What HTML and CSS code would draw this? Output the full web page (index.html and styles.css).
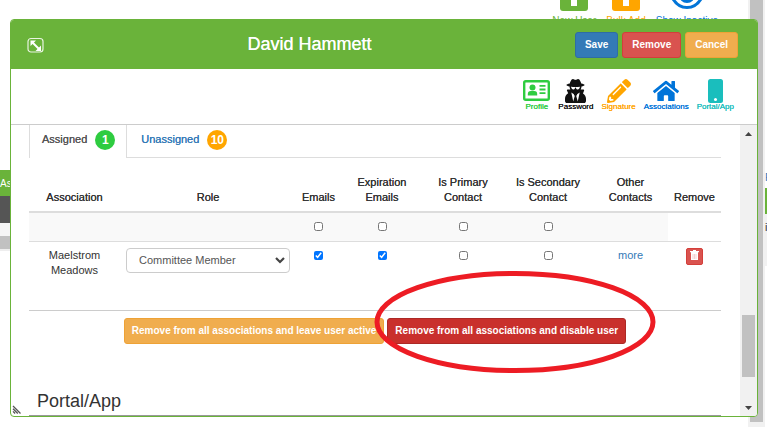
FILE: index.html
```html
<!DOCTYPE html>
<html lang="en">
<head>
<meta charset="utf-8">
<title>David Hammett</title>
<link rel="stylesheet" href="styles.css">
</head>
<body>
<div class="page">
  <div class="page-main">
    <div class="page-tools">
      <a href="#" class="page-tool new"><svg width="28" height="28" viewBox="0 0 28 28"><rect width="28" height="28" rx="3" fill="currentColor"/><path d="M11 5h6v18h-6z" fill="#fff"/></svg>New User</a>
      <a href="#" class="page-tool bulk"><svg width="28" height="28" viewBox="0 0 28 28"><rect width="28" height="28" rx="3" fill="currentColor"/><path d="M11 5h6v18h-6z" fill="#fff"/></svg>Bulk Add</a>
      <a href="#" class="page-tool show"><svg width="38" height="28" viewBox="0 0 38 28"><path d="M2.500 11Q8 24.500 19 24.500T35.500 11" fill="none" stroke="currentColor" stroke-width="3"/><circle cx="19" cy="12" r="8" fill="currentColor"/></svg>Show Inactive</a>
    </div>
    <div class="strip strip-head">As</div>
    <div class="strip strip-dark"></div>
    <div class="strip strip-light"></div>
    <div class="strip strip-scroll"></div>
    <div class="strip strip-end"></div>
  </div>
  <div class="page-track"><div class="page-thumb"></div></div>
  <div class="page-edge"><div class="edge-link">P</div><div class="edge-head"></div><div class="edge-row">i</div></div>
</div>

<div class="dialog" role="dialog" aria-labelledby="title">
  <header class="dialog-head">
    <button class="expand" aria-label="Expand"><svg width="17" height="16" viewBox="0 0 17 16"><rect x="1" y="1.500" width="15" height="13.500" rx="3" fill="none" stroke="#fff" stroke-opacity=".85" stroke-width="1.200"/><path d="M3.500 3.500h5.500L3.500 9zM14 14H8.500L14 8.500z" fill="#fff"/><path d="M5 5l7.500 7.500" stroke="#fff" stroke-width="2"/></svg></button>
    <h1 id="title">David Hammett</h1>
    <div class="actions">
      <button class="btn save">Save</button>
      <button class="btn danger">Remove</button>
      <button class="btn warn">Cancel</button>
    </div>
  </header>
  <nav class="sections">
    <a href="#" class="profile"><svg width="27" height="24" viewBox="0 0 27 24"><rect x="1.200" y="2.200" width="24.600" height="18.600" rx="1.500" fill="none" stroke="currentColor" stroke-width="2.400"/><circle cx="9.500" cy="8.500" r="3" fill="currentColor"/><path d="M4.800 16.500v-1.500q0-3 3-3h3.400q3 0 3 3v1.500zM16.500 6h6v1.800h-6zM16.500 9.600h6v1.800h-6zM16.500 13.200h6V15h-6z" fill="currentColor"/></svg>Profile</a>
    <a href="#" class="password"><svg width="21" height="24" viewBox="0 0 448 512"><path fill="currentColor" d="M383.9 308.3l23.9-62.6c4-10.500-3.700-21.700-15-21.700h-58.500c11-18.900 17.800-40.600 17.800-64v-.3c39.200-7.800 64-19.100 64-31.700 0-13.300-27.300-25.100-70.100-33-9.200-32.800-27-65.800-40.600-82.800-9.500-11.900-25.900-15.600-39.500-8.800l-27.600 13.800c-9 4.500-19.600 4.500-28.600 0L182.100 3.400c-13.600-6.800-30-3.100-39.500 8.800-13.500 17-31.400 50-40.600 82.800-42.700 7.900-70 19.700-70 33 0 12.600 24.800 23.900 64 31.700v.3c0 23.400 6.800 45.100 17.800 64H56.300c-11.500 0-19.200 11.700-14.700 22.300l25.800 60.200C27.300 329.800 0 372.700 0 422.400v44.800C0 491.900 20.100 512 44.800 512h358.400c24.700 0 44.800-20.100 44.800-44.800v-44.800c0-48.400-25.800-90.400-64.100-114.100zM176 480l-41.600-192 49.600 32 24 40-32 120zm96 0l-32-120 24-40 49.600-32L272 480zm41.700-298.500c-3.900 11.900-7 24.600-16.500 33.400-10.100 9.300-48 22.400-64-25-2.800-8.400-15.400-8.400-18.300 0-17 50.200-56 32.400-64 25-9.500-8.800-12.700-21.500-16.500-33.400-.8-2.500-6.300-5.700-6.300-5.800v-10.800c28.300 3.600 61 5.800 96 5.800s67.700-2.100 96-5.800v10.800c-.1.1-5.600 3.200-6.400 5.800z"/></svg>Password</a>
    <a href="#" class="signature"><svg width="24" height="24" viewBox="0 0 512 512"><path fill="currentColor" d="M497.900 142.100l-46.100 46.100c-4.700 4.700-12.300 4.700-17 0l-111-111c-4.700-4.700-4.700-12.300 0-17l46.100-46.100c18.700-18.700 49.100-18.700 67.900 0l60.100 60.100c18.800 18.700 18.800 49.100 0 67.900zM284.200 99.800L21.600 362.400.4 483.900c-2.900 16.400 11.400 30.600 27.800 27.800l121.500-21.300 262.600-262.600c4.700-4.700 4.700-12.300 0-17l-111-111c-4.800-4.700-12.400-4.700-17.100 0zM124.100 339.900c-5.500-5.500-5.500-14.300 0-19.800l154-154c5.500-5.500 14.300-5.500 19.800 0s5.500 14.300 0 19.800l-154 154c-5.500 5.500-14.300 5.500-19.800 0zM88 424h48v36.300l-64.500 11.300-31.100-31.100L51.700 376H88v48z"/></svg>Signature</a>
    <a href="#" class="assoc"><svg width="26" height="24" viewBox="0 0 576 512"><path fill="currentColor" d="M280.370 148.260L96 300.110V464a16 16 0 0 0 16 16l112.060-.29a16 16 0 0 0 15.920-16V368a16 16 0 0 1 16-16h64a16 16 0 0 1 16 16v95.640a16 16 0 0 0 16 16.050L464 480a16 16 0 0 0 16-16V300L295.670 148.260a12.190 12.190 0 0 0-15.300 0zM571.600 251.470L488 182.560V44.050a12 12 0 0 0-12-12h-56a12 12 0 0 0-12 12v72.610L318.470 43a48 48 0 0 0-61 0L4.340 251.470a12 12 0 0 0-1.600 16.900l25.500 31A12 12 0 0 0 45.150 301l235.220-193.740a12.190 12.190 0 0 1 15.300 0L530.900 301a12 12 0 0 0 16.900-1.600l25.500-31a12 12 0 0 0-1.700-16.930z"/></svg>Associations</a>
    <a href="#" class="portal"><svg width="15" height="24" viewBox="0 0 15 24"><rect width="15" height="24" rx="2.500" fill="currentColor"/><circle cx="7.500" cy="20.500" r="1.500" fill="#fff"/></svg>Portal/App</a>
  </nav>
  <div class="scroller">
    <main class="content">
      <div class="tabs" role="tablist">
        <button class="tab active" role="tab" aria-selected="true">Assigned <span class="badge green">1</span></button>
        <button class="tab" role="tab" aria-selected="false">Unassigned <span class="badge orange">10</span></button>
      </div>
      <table>
        <colgroup><col class="c-assoc"><col class="c-role"><col class="c-emails"><col class="c-exp"><col class="c-prim"><col class="c-sec"><col class="c-other"><col class="c-remove"></colgroup>
        <thead><tr><th>Association</th><th>Role</th><th>Emails</th><th>Expiration Emails</th><th>Is Primary Contact</th><th>Is Secondary Contact</th><th>Other Contacts</th><th>Remove</th></tr></thead>
        <tbody>
          <tr class="all"><td></td><td></td><td><input type="checkbox" aria-label="All emails"></td><td><input type="checkbox" aria-label="All expiration emails"></td><td><input type="checkbox" aria-label="All primary contacts"></td><td><input type="checkbox" aria-label="All secondary contacts"></td><td></td><td class="plain"></td></tr>
          <tr class="member">
            <td>Maelstrom Meadows</td>
            <td class="role"><div class="select"><select aria-label="Role"><option>Committee Member</option></select><svg width="10" height="7" viewBox="0 0 10 7"><path d="M1 1l4 4 4-4" fill="none" stroke="#444" stroke-width="2.200"/></svg></div></td>
            <td><input type="checkbox" aria-label="Emails" checked></td><td><input type="checkbox" aria-label="Expiration emails" checked></td><td><input type="checkbox" aria-label="Is primary contact"></td><td><input type="checkbox" aria-label="Is secondary contact"></td>
            <td><a href="#">more</a></td>
            <td><button class="trash" aria-label="Remove"><svg width="9" height="10" viewBox="0 0 9 10"><path d="M0 1h3V0h3v1h3v1.300H0zM1 2h7v8H1z" fill="#fff"/><path d="M3 4v5M4.500 4v5M6 4v5" stroke="#e9a3a1" stroke-width=".5"/></svg></button></td>
          </tr>
        </tbody>
      </table>
      <div class="bulk-actions">
        <button class="btn warn">Remove from all associations and leave user active</button>
        <button class="btn deep">Remove from all associations and disable user</button>
      </div>
      <h2>Portal/App</h2>
    </main>
    <div class="track">
      <svg width="7" height="4" viewBox="0 0 7 4"><path d="M0 4L3.500 0 7 4z" fill="#444"/></svg>
      <div class="thumb"></div>
      <svg width="7" height="4" viewBox="0 0 7 4"><path d="M0 0h7L3.500 4z" fill="#444"/></svg>
    </div>
  </div>
  <svg class="grip" width="9" height="9" viewBox="0 0 9 9"><path d="M1 1l7.500 7.500M1 3.700l4.800 4.800M1 6.400l2.100 2.100" stroke="#555" stroke-width="1.300"/></svg>
</div>

<svg class="mark" width="282" height="104" viewBox="0 0 282 104"><ellipse cx="141" cy="52" rx="138" ry="48.500" fill="none" stroke="#ed1c24" stroke-width="5"/></svg>
</body>
</html>
```
FILE: styles.css
```css
* { box-sizing: border-box; }
body {
  margin: 0;
  height: 100vh;
  overflow: hidden;
  background: #fff;
  color: #333;
  font-family: "Liberation Sans", Arial, sans-serif;
  font-size: 11px;
  line-height: 15px;
}
button, select, input { font: inherit; margin: 0; }
a { color: #337ab7; text-decoration: none; }
svg { display: block; flex: none; }

.page { display: grid; grid-template-columns: 1fr 17px 2px; height: 100%; }
.page-main { overflow: hidden; }
.page-tools {
  display: flex;
  justify-content: flex-end;
  gap: 10px;
  height: 187px;
  margin-top: -17px;
  padding-right: 30px;
}
.page-tool { display: flex; flex-direction: column; align-items: center; gap: 2px; font-size: 10px; }
.page-tool.new { color: #6ab33a; }
.page-tool.bulk { color: #ffa500; }
.page-tool.show { color: #0275d8; }
.strip { width: 20px; }
.strip-head { height: 26px; background: #6ab33a; color: #fff; line-height: 28px; font-size: 10px; }
.strip-dark { height: 27px; background: #555; }
.strip-light { height: 13px; background: #f5f5f5; }
.strip-scroll { height: 13px; background: #c1c1c1; }
.strip-end { height: 2px; background: #eee; }
.page-track { background: #f1f1f1; padding: 0 2px 5px; }
.page-thumb { height: 100%; background: #c1c1c1; }
.page-edge { padding-top: 170px; overflow: hidden; }
.edge-link { height: 18px; color: #337ab7; }
.edge-head { height: 26px; background: #6ab33a; }
.edge-row { height: 52px; padding-top: 6px; background: #f1f1f1; }

.dialog {
  position: absolute;
  inset: 19px 9px 10px 10px;
  display: flex;
  flex-direction: column;
  overflow: hidden;
  background: #fff;
  border: 1px solid #6ab33a;
  border-radius: 4px;
}
.dialog-head {
  display: grid;
  grid-template-columns: auto 1fr auto;
  align-items: center;
  flex: none;
  height: 49px;
  padding: 0 19px 0 16px;
  background: #6ab33a;
  color: #fff;
}
h1, h2 { margin: 0; font-size: 18px; line-height: 24px; font-weight: 400; }
h1 { padding-bottom: 2px; text-align: center; text-shadow: 0 0 0 currentColor; }
.expand { padding: 0; border: 0; background: none; }
.actions { display: flex; justify-content: flex-end; gap: 4px; }
.btn {
  height: 26px;
  padding: 0 9px;
  border: 1px solid;
  border-radius: 3px;
  color: #fff;
  font-size: 10px;
  font-weight: 700;
  white-space: nowrap;
}
.save { background: #337ab7; border-color: #2e6da4; }
.danger { background: #d9534f; border-color: #d43f3a; }
.warn { background: #f0ad4e; border-color: #eea236; }
.deep { background: #c9302c; border-color: #ac2925; }

.sections {
  display: flex;
  justify-content: flex-end;
  gap: 8px;
  flex: none;
  height: 56px;
  padding: 10px 23px 0 0;
  border-bottom: 1px solid #ccc;
}
.sections a {
  display: flex;
  flex-direction: column;
  align-items: center;
  font-size: 8px;
  line-height: 8px;
  text-shadow: 0 0 0 currentColor;
}
.sections .profile { color: #2ecc40; }
.sections .password { color: #111; }
.sections .signature { color: #ffa500; }
.sections .assoc { color: #0074d9; }
.sections .portal { color: #1abebd; }

.scroller { display: flex; flex: 1; min-height: 0; }
.content { flex: 1; padding: 0 19px 0 18px; overflow: hidden; }
.tabs { display: flex; height: 33px; border-bottom: 1px solid #ddd; }
.tab {
  display: flex;
  align-items: center;
  gap: 8px;
  height: 32px;
  padding: 0 14px 3px;
  border: 0;
  background: #fff;
  color: #337ab7;
  text-shadow: 0 0 0 currentColor;
}
.tab.active { height: 33px; padding: 0 11px 4px 12px; border: solid #ddd; border-width: 0 1px; color: #555; }
.badge { width: 20px; height: 20px; border-radius: 50%; color: #fff; font-size: 12px; line-height: 20px; font-weight: 700; text-align: center; text-shadow: none; }
.green { background: #2ecc40; }
.orange { background: #ffa500; }

table { width: 100%; table-layout: fixed; border-collapse: collapse; border-bottom: 1px solid #ccc; text-align: center; }
.c-assoc { width: 91px; }
.c-role { width: 176px; }
.c-emails { width: 45px; }
.c-exp { width: 82px; }
.c-prim { width: 80px; }
.c-sec { width: 90px; }
.c-other { width: 75px; }
.c-remove { width: 53px; }
th { height: 54px; padding: 0 4px 6px; border-bottom: 2px solid #ddd; font-weight: 400; vertical-align: bottom; text-shadow: 0 0 0 currentColor; }
td { padding: 6px 4px 0; vertical-align: top; }
th:last-child, td:last-child { padding-left: 0; padding-right: 0; }
input[type="checkbox"] { display: block; width: 9px; height: 9px; margin: 3px auto 0; }
.all td { height: 29px; background: #f9f9f9; border-bottom: 1px solid #ddd; }
.all .plain { background: #fff; }
.member td { height: 69px; }
td.role { padding: 6px 6px 0; }
.select { display: grid; align-items: center; }
.select > * { grid-area: 1 / 1; }
.select svg { justify-self: end; margin-right: 5px; pointer-events: none; }
select { appearance: none; width: 100%; height: 25px; padding: 0 12px; border: 1px solid #ccc; border-radius: 4px; background: #fff; color: #555; }
.trash { display: grid; place-items: center; width: 17px; height: 17px; margin: 0 auto; padding: 0 0 2px; border: 1px solid #d43f3a; border-radius: 2px; background: #d9534f; }

.bulk-actions { display: flex; justify-content: center; gap: 3px; margin-top: 7px; }
.bulk-actions .btn { padding: 0 7px; }
h2 { margin-top: 45px; padding: 0 8px 2px; border-bottom: 1px solid #999; }

.track { display: grid; grid-template-rows: 17px 1fr 17px; place-items: center; width: 17px; background: #f1f1f1; }
.thumb { align-self: end; width: 13px; height: 62px; margin-bottom: 22px; background: #c1c1c1; }
.grip { position: absolute; left: 1px; bottom: 2px; }
.mark { position: absolute; left: 374px; top: 270px; pointer-events: none; }
```
